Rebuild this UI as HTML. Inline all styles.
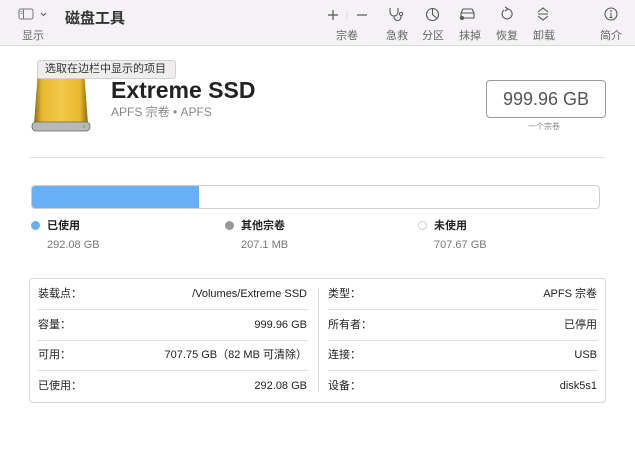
<!DOCTYPE html>
<html><head><meta charset="utf-8"><style>
*{margin:0;padding:0;box-sizing:border-box}
body{width:635px;height:460px;background:#fff;font-family:"Liberation Sans","Noto Sans CJK SC",sans-serif;position:relative;overflow:hidden;color:#222}
.a{position:absolute;white-space:nowrap}
.tb{position:absolute;left:0;top:0;width:635px;height:46px;background:#f4f2f5;border-bottom:1px solid #dcdadc}
.lb{font-size:11px;color:#666;line-height:14px}
.ic{position:absolute}
.row{font-size:11px;color:#222;line-height:14px}
.sep{position:absolute;height:1px;background:#e2e2e2}
</style></head><body>
<div class="tb">
<svg class="ic" style="left:18px;top:8px" width="32" height="12" viewBox="0 0 32 12"><rect x="1" y="1" width="14" height="10" rx="2" fill="none" stroke="#777" stroke-width="1"/><line x1="5.5" y1="1" x2="5.5" y2="11" stroke="#777"/><path d="M2.5 3.5h2M2.5 5.5h2" stroke="#777" stroke-width=".8"/><path d="M23 5l2.5 2.5L28 5" fill="none" stroke="#666" stroke-width="1.2"/></svg>
<div class="a lb" style="left:22px;top:29px">显示</div>
<div class="a" style="left:65px;top:9px;font-size:15px;font-weight:bold;color:#333;line-height:20px">磁盘工具</div>
<svg class="ic" style="left:326px;top:8px" width="42" height="14"><path d="M2 7h10M7 2v10" stroke="#555" stroke-width="1.2"/><line x1="21" y1="2" x2="21" y2="12" stroke="#ddd"/><path d="M31 7h10" stroke="#555" stroke-width="1.2"/></svg>
<div class="a lb" style="left:336px;top:29px">宗卷</div>
<svg class="ic" style="left:387px;top:6px" width="22" height="16"><path d="M3 2v4a4 4 0 0 0 8 0V2M7 10v1a3.5 3.5 0 0 0 7 0V9" fill="none" stroke="#555" stroke-width="1.1"/><circle cx="14" cy="8" r="1.6" fill="none" stroke="#555"/></svg>
<div class="a lb" style="left:386px;top:29px">急救</div>
<svg class="ic" style="left:425px;top:7px" width="16" height="16"><circle cx="7.5" cy="7.5" r="6" fill="none" stroke="#555" stroke-width="1.1"/><path d="M7.5 1.5v6l4 3.5" fill="none" stroke="#555" stroke-width="1.1"/></svg>
<div class="a lb" style="left:422px;top:29px">分区</div>
<svg class="ic" style="left:458px;top:7px" width="20" height="14"><path d="M3 6l2-4h9l2 4v5H3z" fill="none" stroke="#555" stroke-width="1.1"/><line x1="3" y1="6" x2="16" y2="6" stroke="#555"/><circle cx="4" cy="11" r="2" fill="#555"/></svg>
<div class="a lb" style="left:459px;top:29px">抹掉</div>
<svg class="ic" style="left:500px;top:6px" width="14" height="16"><path d="M4 4a5 5 0 1 0 4-1" fill="none" stroke="#555" stroke-width="1.1"/><path d="M5 1l3 2-3 2" fill="none" stroke="#555" stroke-width="1.1"/></svg>
<div class="a lb" style="left:496px;top:29px">恢复</div>
<svg class="ic" style="left:536px;top:6px" width="14" height="16"><path d="M2 6l5-4 5 4M2 10l5 4 5-4M2 8h10" fill="none" stroke="#555" stroke-width="1.1"/></svg>
<div class="a lb" style="left:533px;top:29px">卸载</div>
<svg class="ic" style="left:603px;top:6px" width="16" height="16"><circle cx="8" cy="8" r="6" fill="none" stroke="#555" stroke-width="1.1"/><path d="M8 7v4.5M6.5 11.5h3" stroke="#555"/><circle cx="8" cy="5" r=".9" fill="#555"/></svg>
<div class="a lb" style="left:600px;top:29px">简介</div>
</div>
<svg class="ic" style="left:30px;top:66px" width="62" height="68"><defs><linearGradient id="g" x1="0" x2="1"><stop offset="0" stop-color="#8a6a10"/><stop offset=".15" stop-color="#e8b930"/><stop offset=".5" stop-color="#f3c94a"/><stop offset=".85" stop-color="#e8b930"/><stop offset="1" stop-color="#8a6a10"/></linearGradient></defs><path d="M8 4h46l4 54H4z" fill="url(#g)"/><rect x="2" y="56" width="58" height="9" rx="4" fill="#b9b9b9" stroke="#666" stroke-width=".8"/><circle cx="54" cy="60.5" r="1.3" fill="#5c5"/></svg>
<div class="a" style="left:37px;top:60px;width:139px;height:19px;background:#efeded;border:1px solid #d0d0d0;border-radius:3px;font-size:11px;color:#333;padding:0 0 0 7px;line-height:17px">选取在边栏中显示的项目</div>
<div class="a" style="left:111px;top:76px;font-size:23px;font-weight:bold;color:#222;line-height:28px">Extreme SSD</div>
<div class="a" style="left:111px;top:105px;font-size:12px;color:#888;line-height:15px">APFS 宗卷 • APFS</div>
<div class="a" style="left:486px;top:80px;width:120px;height:38px;border:1px solid #999;border-radius:4px;text-align:center;font-size:18px;color:#555;line-height:36px">999.96 GB</div>
<div class="a" style="left:528px;top:122px;font-size:8px;color:#888;line-height:10px">一个宗卷</div>
<div class="sep" style="left:29px;top:157px;width:576px"></div>
<div class="a" style="left:31px;top:185px;width:569px;height:24px;border:1px solid #cfcfcf;border-radius:4px;overflow:hidden"><div style="width:167px;height:100%;background:#68b0f5"></div></div>
<div class="a" style="left:31px;top:221px;width:9px;height:9px;border-radius:50%;background:#68b0f5"></div>
<div class="a row" style="left:47px;top:219px;font-weight:bold">已使用</div>
<div class="a row" style="left:47px;top:238px;color:#777">292.08 GB</div>
<div class="a" style="left:225px;top:221px;width:9px;height:9px;border-radius:50%;background:#999"></div>
<div class="a row" style="left:241px;top:219px;font-weight:bold">其他宗卷</div>
<div class="a row" style="left:241px;top:238px;color:#777">207.1 MB</div>
<div class="a" style="left:418px;top:221px;width:9px;height:9px;border-radius:50%;border:1px solid #ccc"></div>
<div class="a row" style="left:434px;top:219px;font-weight:bold">未使用</div>
<div class="a row" style="left:434px;top:238px;color:#777">707.67 GB</div>
<div class="a" style="left:29px;top:278px;width:577px;height:125px;border:1px solid #d6d6d6;border-radius:4px"></div>
<div class="a" style="left:318px;top:288px;width:1px;height:104px;background:#ddd"></div>
<div class="sep" style="left:37px;top:309px;width:271px"></div><div class="sep" style="left:37px;top:340px;width:271px"></div><div class="sep" style="left:37px;top:370px;width:271px"></div>
<div class="sep" style="left:328px;top:309px;width:270px"></div><div class="sep" style="left:328px;top:340px;width:270px"></div><div class="sep" style="left:328px;top:370px;width:270px"></div>
<div class="a row" style="left:38px;top:287px">装载点：</div><div class="a row" style="right:328px;top:287px">/Volumes/Extreme SSD</div>
<div class="a row" style="left:38px;top:318px">容量：</div><div class="a row" style="right:328px;top:318px">999.96 GB</div>
<div class="a row" style="left:38px;top:348px">可用：</div><div class="a row" style="right:328px;top:348px">707.75 GB（82 MB 可清除）</div>
<div class="a row" style="left:38px;top:379px">已使用：</div><div class="a row" style="right:328px;top:379px">292.08 GB</div>
<div class="a row" style="left:328px;top:287px">类型：</div><div class="a row" style="right:38px;top:287px">APFS 宗卷</div>
<div class="a row" style="left:328px;top:318px">所有者：</div><div class="a row" style="right:38px;top:318px">已停用</div>
<div class="a row" style="left:328px;top:348px">连接：</div><div class="a row" style="right:38px;top:348px">USB</div>
<div class="a row" style="left:328px;top:379px">设备：</div><div class="a row" style="right:38px;top:379px">disk5s1</div>
</body></html>
